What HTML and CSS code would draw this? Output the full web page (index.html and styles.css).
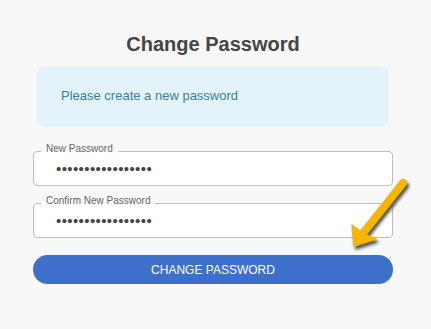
FILE: index.html
```html
<!doctype html>
<html>
    <head>
        <meta charset="utf-8">
        <title>Change Password</title>
        <link rel="stylesheet" href="styles.css">
    </head>
    <body>
        <main class="page">
            <h1 class="title">Change Password</h1>
            <div class="notice">Please create a new password</div>
            <form class="form">
                <div class="field">
                    <label for="new-password">New Password</label>
                    <input id="new-password" type="password" value="passwordpassword1">
                </div>
                <div class="field">
                    <label for="confirm-password">Confirm New Password</label>
                    <input id="confirm-password" type="password" value="passwordpassword1">
                </div>
                <button type="button" class="submit">Change Password</button>
            </form>
            <svg class="pointer" width="80" height="90" viewBox="0 0 80 90">
                <g fill="#f6b600" stroke="#f6b600">
                    <line x1="63" y1="13" x2="24" y2="62" stroke-width="8" stroke-linecap="round"/>
                    <path d="M14 76 L12 55 L23 64 L36 69 Z" stroke-width="1.5" stroke-linejoin="round"/>
                </g>
            </svg>
        </main>
    </body>
</html>
```

FILE: styles.css
```css
html,
body {
    margin: 0;
    height: 100%;
    background-color: #f8f8f8;
}

* {
    font-family: "Liberation Sans", Arial, sans-serif;
    box-sizing: border-box;
}

.page {
    position: relative;
    width: 360px;
    margin-left: 33px;
    padding-top: 33px;
}

.title {
    margin: 0;
    font-size: 20px;
    line-height: 23px;
    font-weight: bold;
    text-align: center;
    color: #444;
}

.notice {
    display: flex;
    align-items: center;
    width: 352px;
    height: 61px;
    margin: 10px 0 0 4px;
    padding: 0 0 2px 24px;
    border-radius: 9px;
    background-color: #e4f3fa;
    color: #3d7d9b;
    font-size: 13px;
}

.form {
    margin-top: 24px;
}

.field {
    position: relative;
    height: 35px;
    margin-bottom: 17px;
    border: 1px solid #bdbdbd;
    border-radius: 4px;
    background-color: #fff;
}

.field label {
    position: absolute;
    top: -9px;
    left: 7px;
    padding: 0 5px;
    font-size: 10px;
    line-height: 12px;
    color: #666;
    background: linear-gradient(#f8f8f8 8px, #fff 8px);
}

.field input {
    width: 100%;
    height: 100%;
    padding: 0 22px;
    border: none;
    outline: none;
    background-color: transparent;
    font-size: 15px;
    letter-spacing: .4px;
    color: #444;
}

.submit {
    display: block;
    width: 100%;
    height: 29px;
    margin-top: 17px;
    border: none;
    border-radius: 15px;
    background-color: #3c70cb;
    color: #fff;
    font-size: 12px;
    text-transform: uppercase;
    cursor: pointer;
}

.pointer {
    position: absolute;
    left: 307px;
    top: 170px;
    filter: drop-shadow(2px 3px 1.5px rgba(0, 0, 0, .65));
}
```
